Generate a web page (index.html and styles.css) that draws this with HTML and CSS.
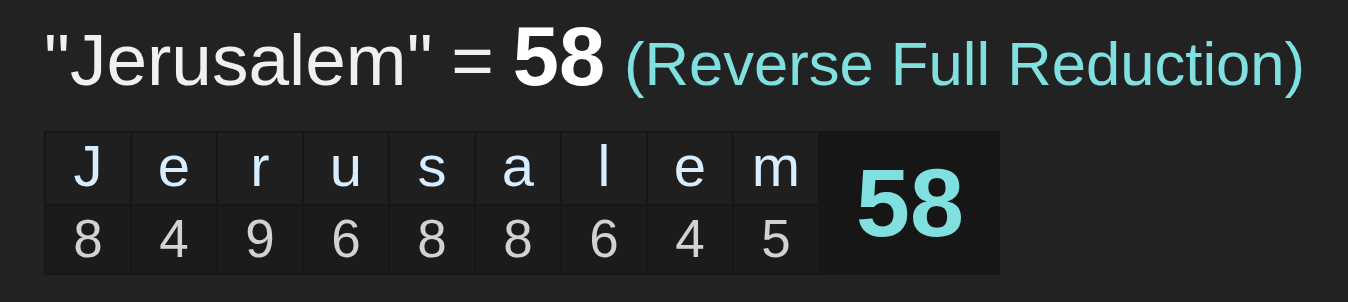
FILE: index.html
```html
<!DOCTYPE html>
<html lang="en">
<head>
    <meta charset="UTF-8">
    <meta name="viewport" content="width=device-width, initial-scale=1.0">
    <title>Jerusalem - Reverse Full Reduction</title>
    <link rel="stylesheet" href="styles.css">
</head>
<body>
    <h1 class="title">"Jerusalem" = <b class="total">58</b> <span class="cipher">(Reverse Full Reduction)</span></h1>

    <div class="breakdown">
        <div class="letter">J</div>
        <div class="letter">e</div>
        <div class="letter">r</div>
        <div class="letter">u</div>
        <div class="letter">s</div>
        <div class="letter">a</div>
        <div class="letter">l</div>
        <div class="letter">e</div>
        <div class="letter">m</div>
        <div class="sum">58</div>
        <div class="value">8</div>
        <div class="value">4</div>
        <div class="value">9</div>
        <div class="value">6</div>
        <div class="value">8</div>
        <div class="value">8</div>
        <div class="value">6</div>
        <div class="value">4</div>
        <div class="value">5</div>
    </div>
</body>
</html>
```

FILE: styles.css
```css
body {
    margin: 0;
    padding: 17px 44px 0;
    background: #222222;
    font-family: "Liberation Sans", Arial, sans-serif;
    color: #f0f0f0;
}

.title {
    margin: 0;
    font-size: 73px;
    font-weight: normal;
    line-height: 80px;
    white-space: nowrap;
    word-spacing: -1.5px;
}

.total {
    font-size: 83px;
    font-weight: bold;
    color: #ffffff;
}

.cipher {
    font-size: 61.6px;
    color: #80e0e0;
    word-spacing: 0;
}

.breakdown {
    display: inline-grid;
    grid-template-columns: repeat(9, 84px) 180px;
    grid-template-rows: 71px 67px;
    gap: 2px;
    padding: 2px 0 2px 2px;
    margin-top: 27px;
    background: #161616;
}

.letter, .value {
    display: flex;
    align-items: center;
    justify-content: center;
}

.letter {
    background: #1f1f1f;
    color: #d8eeff;
    font-size: 58px;
    padding-bottom: 6px;
}

.value {
    background: #1b1b1b;
    color: #d2d2d2;
    font-size: 53px;
    padding-bottom: 2px;
}

.sum {
    grid-row: span 2;
    display: flex;
    align-items: center;
    justify-content: center;
    background: #161616;
    color: #80e0e0;
    font-size: 97px;
    font-weight: bold;
}
```
